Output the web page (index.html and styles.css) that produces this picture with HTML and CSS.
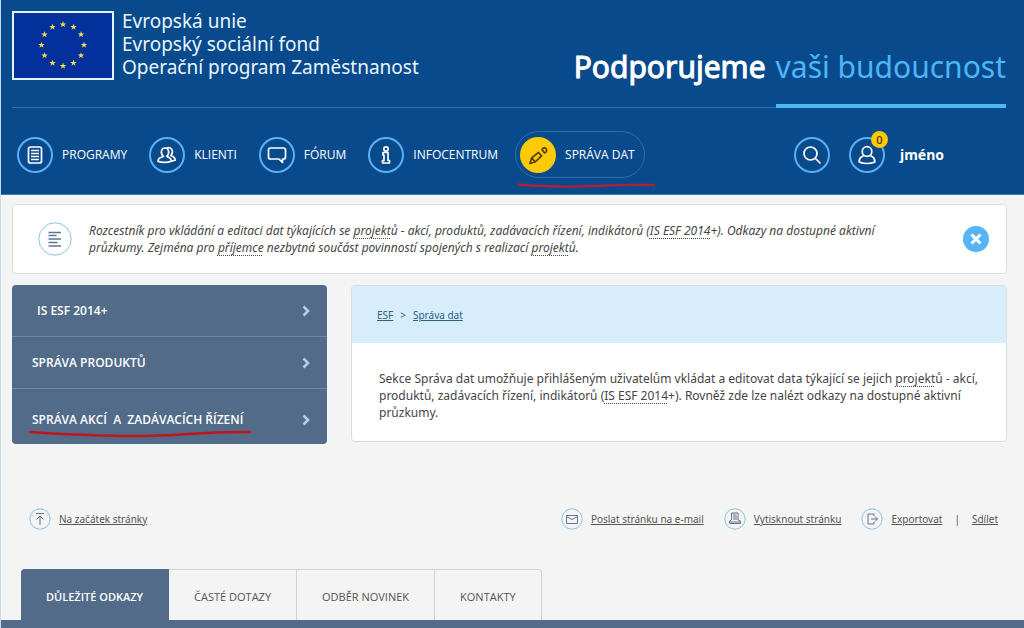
FILE: index.html
```html
<!DOCTYPE html>
<html lang="cs">
<head>
<meta charset="utf-8">
<title>Správa dat</title>
<link rel="stylesheet" href="styles.css">
</head>
<body>
<svg class="defs" aria-hidden="true">
  <symbol id="star" viewBox="-10 -10 20 20"><path d="M0-10 2.3-3.1 9.5-3.1 3.7 1.2 5.9 8.1 0 3.9-5.9 8.1-3.7 1.2-9.5-3.1-2.3-3.1Z"/></symbol>
  <symbol id="chevron" viewBox="0 0 8 12"><path d="M1.500 1.500 6 6l-4.500 4.500" fill="none" stroke="currentColor" stroke-width="2.600"/></symbol>
</svg>
<header class="header">
  <div class="brand-row">
    <a class="brand" href="#">
      <svg class="flag" viewBox="0 0 102 69" aria-hidden="true">
        <rect width="102" height="69" fill="#e4f3ff"/><rect x="2" y="2" width="98" height="65" fill="#03309b"/>
        <g fill="#f3e04c">
          <use href="#star" x="47.500" y="10" width="7" height="7"/><use href="#star" x="58" y="12.500" width="7" height="7"/>
          <use href="#star" x="65.500" y="20" width="7" height="7"/><use href="#star" x="68.500" y="30.500" width="7" height="7"/>
          <use href="#star" x="65.500" y="41" width="7" height="7"/><use href="#star" x="58" y="48.500" width="7" height="7"/>
          <use href="#star" x="47.500" y="51.500" width="7" height="7"/><use href="#star" x="37" y="48.500" width="7" height="7"/>
          <use href="#star" x="29" y="41" width="7" height="7"/><use href="#star" x="26" y="30.500" width="7" height="7"/>
          <use href="#star" x="29" y="20" width="7" height="7"/><use href="#star" x="37" y="12.500" width="7" height="7"/>
        </g>
      </svg>
      <span class="brand-text">Evropská unie<br>Evropský sociální fond<br>Operační program Zaměstnanost</span>
    </a>
    <p class="slogan"><span class="slogan-main">Podporujeme</span> <span class="slogan-accent">vaši budoucnost</span></p>
  </div>
  <div class="nav-row">
    <nav class="nav">
      <a class="nav-link" href="#"><span class="ring"><svg viewBox="0 0 36 36"><rect x="11.500" y="10" width="13" height="16" rx="2"/><path d="M14 13.500h8M14 16.500h8M14 19.500h8M14 22.500h8"/></svg></span>PROGRAMY</a>
      <a class="nav-link" href="#"><span class="ring"><svg viewBox="0 0 36 36"><path d="M14.500 19.500C11 16.500 12 11 16 11s5 5.500 1.700 8.500c3 .8 4.500 2.500 4.500 4.700-3.500 1.600-10 1.600-13.200 0 0-2.200 2.500-4 5.500-4.700ZM17.500 11.200c4.500-2.200 8 3 4.300 7.300 2.600 1 4.400 2.500 4.400 4.700l-4 1"/></svg></span>KLIENTI</a>
      <a class="nav-link" href="#"><span class="ring"><svg viewBox="0 0 36 36"><path d="M11.500 11h13a2 2 0 0 1 2 2v7a2 2 0 0 1-2 2h-1v3.500L20 22h-8.500a2 2 0 0 1-2-2v-7a2 2 0 0 1 2-2Z"/></svg></span>FÓRUM</a>
      <a class="nav-link" href="#"><span class="ring"><svg viewBox="0 0 36 36"><circle cx="18" cy="12" r="2.200"/><path d="M15 15.500h5v8h1.500V26h-7v-2.500H16v-5.500h-1Z"/></svg></span>INFOCENTRUM</a>
      <a class="nav-link nav-current" href="#" aria-current="page"><span class="ring"><svg viewBox="0 0 36 36"><path d="m10 26.500 1.700-5.700 6.800-5.300 3 3.300-6.300 6.200Zm1.700-5.700 3.500 4.200M22 12.500c1.300-2 3.200-2 4.200-.5s0 3.500-1.700 4Z"/></svg></span>SPRÁVA DAT
        <svg class="mark mark-nav" viewBox="0 0 140 6" aria-hidden="true"><path d="M2 2.500C22 4 60 5.500 90 3.500c16-1 30-.5 48-.5"/></svg>
      </a>
    </nav>
    <div class="user">
      <button class="ring" type="button" aria-label="Hledat"><svg viewBox="0 0 36 36"><circle cx="16.500" cy="16.500" r="6.500"/><path d="m21.500 21.500 5 5"/></svg></button>
      <a class="user-link" href="#"><span class="ring"><svg viewBox="0 0 36 36"><circle cx="18" cy="14.500" r="4.800"/><path d="M15 18.500c-3 1-5 3.200-4.800 6.500 4 2 11.600 2 15.600 0 .2-3.300-1.800-5.500-4.800-6.500"/></svg><span class="badge">0</span></span>jméno</a>
    </div>
  </div>
</header>
<main class="page">
  <section class="notice">
    <svg class="notice-icon" viewBox="0 0 34 34" aria-hidden="true"><circle cx="17" cy="17" r="16.200" fill="none" stroke="#8dc3e2"/><path d="M10.500 10.500H23M10.500 13.500h8M10.500 17H23M10.500 20.500h9M10.500 24H23" stroke="#5c7391" stroke-width="1.400"/></svg>
    <p class="notice-text">Rozcestník pro vkládání a editaci dat týkajících se <a class="term" href="#">projekt</a>ů - akcí, produktů, zadávacích řízení, indikátorů (<a class="term" href="#">IS ESF 2014</a>+). Odkazy na dostupné aktivní průzkumy. Zejména pro <a class="term" href="#">příjemce</a> nezbytná součást povinností spojených s realizací <a class="term" href="#">projekt</a>ů.</p>
    <button class="close" type="button" aria-label="Zavřít"><svg viewBox="0 0 26 26"><path d="m8.500 8.500 9 9m0-9-9 9" stroke="#fff" stroke-width="3"/></svg></button>
  </section>
  <div class="columns">
    <nav class="side">
      <a href="#"><span class="side-label side-first">IS ESF 2014+</span><svg class="chevron"><use href="#chevron"/></svg></a>
      <a href="#"><span class="side-label">SPRÁVA PRODUKTŮ</span><svg class="chevron"><use href="#chevron"/></svg></a>
      <a href="#"><span class="side-label">SPRÁVA AKCÍ &nbsp;A &nbsp;ZADÁVACÍCH ŘÍZENÍ<svg class="mark mark-side" viewBox="0 0 224 8" aria-hidden="true"><path d="M2 2c30 2 70 4 105 4 50 0 60-4.500 115-4"/></svg></span><svg class="chevron"><use href="#chevron"/></svg></a>
    </nav>
    <article class="card">
      <div class="crumbs"><a href="#">ESF</a><span>&gt;</span><a href="#">Správa dat</a></div>
      <p class="card-text">Sekce Správa dat umožňuje přihlášeným uživatelům vkládat a editovat data týkající se jejich <a class="term" href="#">projekt</a>ů - akcí, produktů, zadávacích řízení, indikátorů (<a class="term" href="#">IS ESF 2014</a>+). Rovněž zde lze nalézt odkazy na dostupné aktivní průzkumy.</p>
    </article>
  </div>
  <div class="tools">
    <a class="tool tool-top" href="#"><svg viewBox="0 0 22 22"><circle cx="11" cy="11" r="10.200"/><path d="M7 5.500h8M11 17V8M7.500 11.500 11 8l3.500 3.500"/></svg><span>Na začátek stránky</span></a>
    <a class="tool" href="#"><svg viewBox="0 0 22 22"><circle cx="11" cy="11" r="10.200"/><path d="M5.500 7.500h11v8h-11Zm0 1 5.500 3 5.500-3"/></svg><span>Poslat stránku na e-mail</span></a>
    <a class="tool" href="#"><svg viewBox="0 0 22 22"><circle cx="11" cy="11" r="10.200"/><path d="M7.500 12V5H14v7M9 7h3.500M9 9h4M9 11h4M7.500 12l-2 1v2.500h11V13L14 12M6 14h10"/></svg><span>Vytisknout stránku</span></a>
    <div class="tool-pair"><a class="tool" href="#"><svg viewBox="0 0 22 22"><circle cx="11" cy="11" r="10.200"/><path d="M13 8V6H7v10h6v-2M10 11h6.500M14 8.500l2.500 2.500-2.500 2.500"/></svg><span>Exportovat</span></a><span class="bar">|</span><a class="tool" href="#"><span>Sdílet</span></a></div>
  </div>
  <div class="tabs" role="tablist">
    <button class="tab tab-active" type="button" role="tab" aria-selected="true">DŮLEŽITÉ ODKAZY</button>
    <button class="tab" type="button" role="tab">ČASTÉ DOTAZY</button>
    <button class="tab" type="button" role="tab">ODBĚR NOVINEK</button>
    <button class="tab" type="button" role="tab">KONTAKTY</button>
  </div>
</main>
<footer class="footer"></footer>
</body>
</html>
```
FILE: styles.css
```css
* { box-sizing: border-box; }
body { margin: 0; background: #f4f4f4; border-left: 1px solid #c3d9ef; font-family: "Noto Sans", sans-serif; font-size: 12px; color: #454545; }
p { margin: 0; }
a { color: inherit; text-decoration: none; }
button { font: inherit; color: inherit; margin: 0; padding: 0; border: 0; background: none; cursor: pointer; }
svg { display: block; }
.defs { position: absolute; width: 0; height: 0; }

.header { background: #084a8b; color: #fff; padding: 9px 18px 16px 11px; border-bottom: 1px solid #3d78b0; }
.brand-row { display: flex; justify-content: space-between; align-items: flex-end; min-height: 99px; box-shadow: inset 0 -1px #286fb0; }
.brand { display: flex; gap: 8px; align-self: flex-start; padding-top: 2px; color: #e9f5ff; }
.flag { width: 102px; height: 69px; }
.brand-text { font-size: 19px; line-height: 23px; margin-top: -1px; }
.slogan { display: flex; gap: 10px; font-size: 30px; line-height: 44px; }
.slogan-main { -webkit-text-stroke: 1px #fff; }
.slogan-accent { color: #4eb5f7; padding-bottom: 15px; border-bottom: 4px solid #4eb5f7; }
.slogan span { white-space: nowrap; }

.nav-row { display: flex; justify-content: space-between; align-items: center; padding: 23px 62px 0 5px; }
.nav { display: flex; align-items: center; gap: 22px; }
.nav-link { display: flex; align-items: center; gap: 9px; font-family: "Open Sans", sans-serif; font-size: 12px; font-weight: 500; white-space: nowrap; }
.ring { position: relative; flex: none; width: 36px; height: 36px; border-radius: 50%; box-shadow: inset 0 0 0 2px #5bb0f5; color: #fff; }
.ring svg { width: 36px; height: 36px; fill: none; stroke: currentColor; stroke-width: 1.7; stroke-linejoin: round; }
.nav-current { position: relative; height: 47px; margin-left: -5px; padding: 0 9px 0 4px; border: 1px solid #286fb0; border-radius: 24px; }
.nav-current .ring { background: #fdcb06; box-shadow: none; color: #573c08; }
.mark { position: absolute; fill: none; stroke: #b01f3a; stroke-width: 2.4; stroke-linecap: round; }
.mark-nav { left: 0; top: 50px; width: 140px; height: 6px; }
.user { display: flex; gap: 19px; }
.user-link { display: flex; align-items: center; gap: 15px; font-size: 14px; font-weight: 700; }
.badge { position: absolute; right: -3px; top: -6px; width: 17px; height: 17px; border-radius: 50%; background: #fdcb06; color: #3e3008; font-size: 11px; line-height: 17px; font-weight: 500; text-align: center; }

.page { padding: 9px 17px 0 11px; }
.notice { display: flex; align-items: center; background: #fff; border: 1px solid #dcdce2; border-radius: 4px; padding: 17px 17px 17px 25px; }
.notice-icon { flex: none; width: 34px; height: 34px; }
.notice-text { flex: 1; margin-left: 17px; padding-right: 60px; font-size: 12px; line-height: 17px; font-style: italic; }
.term { text-decoration: underline dotted 1px; text-underline-offset: 3px; text-decoration-skip-ink: none; }
.close { width: 26px; height: 26px; border-radius: 50%; background: #55b3f6; }
.columns { display: grid; grid-template-columns: 315px 1fr; gap: 24px; align-items: start; margin-top: 11px; }
.side { background: #516b89; border-radius: 4px; color: #fff; font-family: "Open Sans", sans-serif; font-size: 12px; font-weight: 600; }
.side a { display: flex; justify-content: space-between; align-items: center; min-height: 52px; padding: 0 17px 0 20px; }
.side a:first-child { min-height: 51px; }
.side a + a { border-top: 1px solid #6b86a6; }
.side a:last-child { min-height: 56px; padding-top: 6px; }
.side-label { position: relative; white-space: nowrap; }
.side-first { padding-left: 5px; }
.chevron { width: 8px; height: 12px; color: #b4cce4; }
.mark-side { left: -4px; top: 19px; width: 224px; height: 8px; stroke: #c3141e; }
.card { background: #fff; border: 1px solid #d5dde3; border-radius: 4px; overflow: hidden; }
.crumbs { display: flex; gap: 7px; align-items: center; min-height: 57px; padding: 0 25px; background: #d7edfb; color: #2f6186; font-size: 10px; }
.crumbs a, .tool span { text-decoration: underline; }
.card-text { padding: 27px 25px 20px 27px; line-height: 17px; }

.tools { display: flex; align-items: center; gap: 20px; margin-top: 64px; padding: 0 9px 0 17px; font-size: 10px; color: #555; }
.tool { display: flex; align-items: center; gap: 8px; white-space: nowrap; }
.tool-top { margin-right: auto; }
.tool svg { width: 22px; height: 22px; fill: none; stroke: #62738a; }
.tool circle { stroke: #8dc3e2; }
.tool-pair { display: flex; align-items: center; gap: 12px; }
.tabs { display: flex; margin: 39px 0 0 9px; }
.tab { height: 51px; padding: 3px 25px 0; border: 1px solid #d3d3d3; border-width: 1px 1px 0 0; font-family: "Open Sans", sans-serif; font-size: 11px; font-weight: 500; color: #555; white-space: nowrap; }
.tab:last-child { border-top-right-radius: 4px; }
.tab-active { background: #516b89; border-color: #516b89; border-top-left-radius: 4px; color: #fff; font-weight: 600; }
.footer { height: 8px; background: #516b89; }
```
